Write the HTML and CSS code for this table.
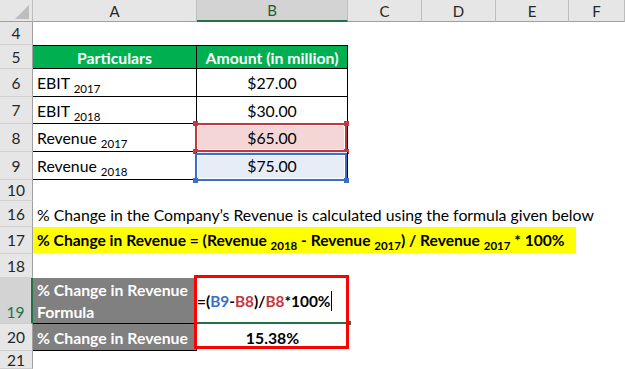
FILE: index.html
```html
<!DOCTYPE html>
<html>
<head>
<meta charset="utf-8">
<link rel="stylesheet" href="styles.css">
</head>
<body>
<div class="sheet">
  <div class="corner"><svg width="33" height="22" viewBox="0 0 33 22"><polygon points="29,5 29,19 15,19" fill="#bdbdbd"/></svg></div>
  <div class="colhdr">A</div>
  <div class="colhdr sel">B</div>
  <div class="colhdr">C</div>
  <div class="colhdr">D</div>
  <div class="colhdr">E</div>
  <div class="colhdr">F</div>

  <div class="rowhdr">4</div><div class="blank span6"></div>

  <div class="rowhdr">5</div>
  <div class="cell th">Particulars</div>
  <div class="cell th">Amount (in million)</div>
  <div class="blank span4"></div>

  <div class="rowhdr">6</div>
  <div class="cell td"><span>EBIT <sub>2017</sub></span></div>
  <div class="cell td num">$27.00</div>
  <div class="blank span4"></div>

  <div class="rowhdr">7</div>
  <div class="cell td"><span>EBIT <sub>2018</sub></span></div>
  <div class="cell td num">$30.00</div>
  <div class="blank span4"></div>

  <div class="rowhdr">8</div>
  <div class="cell td"><span>Revenue <sub>2017</sub></span></div>
  <div class="cell td num ref-red">$65.00<span class="selbox red"><i class="h tl"></i><i class="h tr"></i><i class="h bl"></i><i class="h br"></i></span></div>
  <div class="blank span4"></div>

  <div class="rowhdr">9</div>
  <div class="cell td"><span>Revenue <sub>2018</sub></span></div>
  <div class="cell td num ref-blue">$75.00<span class="selbox blue"><i class="h bl"></i><i class="h br"></i></span></div>
  <div class="blank span4"></div>

  <div class="rowhdr">10</div><div class="blank span6"></div>

  <div class="rowhdr">16</div>
  <div class="text span6">% Change in the Company’s Revenue is calculated using the formula given below</div>

  <div class="rowhdr">17</div>
  <div class="span6"><div class="highlight"><span>% Change in Revenue = (Revenue <sub>2018</sub> - Revenue <sub>2017</sub>) / Revenue <sub>2017</sub> * 100%</span></div></div>

  <div class="rowhdr">18</div><div class="blank span6"></div>

  <div class="rowhdr active">19</div>
  <div class="label tall">% Change in Revenue<br>Formula</div>
  <div class="result">
    <div class="formula"><span>=(<span class="b">B9</span>-<span class="r">B8</span>)/<span class="r">B8</span>*100%</span><span class="caret"></span><i class="edit-handle"></i></div>
    <div class="value">15.38%</div>
  </div>
  <div class="blank span4"></div>

  <div class="rowhdr">20</div>
  <div class="label">% Change in Revenue</div>
  <div class="blank span4"></div>

  <div class="rowhdr">21</div><div class="blank span6"></div>
</div>
</body>
</html>
```
FILE: styles.css
```css
html, body {
  margin: 0;
  padding: 0;
  background: #fff;
  overflow: hidden;
}
.sheet {
  width: 625px;
  height: 369px;
  display: grid;
  grid-template-columns: 33px 164px 151px 74px 74px 73px 56px;
  grid-template-rows: 22px 23px 24px 28px 27px 28px 28px 21px 26px 27px 24px 46px 27px 18px;
  font-family: Lato, "Open Sans", sans-serif;
  font-size: 15.8px;
  color: #000;
  overflow: hidden;
}
.corner {
  background: #e6e6e6;
  border-right: 1px solid #bdbdbd;
  border-bottom: 1px solid #a0a0a0;
  box-sizing: border-box;
}
.corner svg { display: block; }
.colhdr {
  background: #e6e6e6;
  border-right: 1px solid #bdbdbd;
  border-bottom: 1px solid #a0a0a0;
  box-sizing: border-box;
  display: flex;
  align-items: center;
  justify-content: center;
  color: #262626;
  font-size: 15px;
}
.colhdr.sel {
  background: #d3d3d3;
  border-bottom: 2px solid #217346;
  color: #1d5e36;
}
.rowhdr {
  background: #e6e6e6;
  border-right: 1px solid #a0a0a0;
  border-bottom: 1px solid #cfcfcf;
  box-sizing: border-box;
  display: flex;
  align-items: center;
  justify-content: center;
  color: #262626;
  font-size: 15.5px;
}
.rowhdr.active {
  background: #d3d3d3;
  color: #217346;
  border-right: 2px solid #217346;
  align-items: flex-end;
  padding-bottom: 2px;
}
.span6 { grid-column: span 6; }
.span4 { grid-column: span 4; }
.cell {
  box-sizing: border-box;
  border-right: 1px solid #000;
  border-bottom: 1px solid #000;
  display: flex;
  align-items: center;
  white-space: nowrap;
  position: relative;
}
.th {
  background: #00b050;
  color: #fff;
  font-weight: bold;
  justify-content: center;
  border-top: 1px solid #000;
}
.td { padding-left: 4px; }
.num { justify-content: center; padding-left: 0; }
sub {
  font-size: 11.5px;
  vertical-align: -4px;
  line-height: 0;
}
.ref-red { background: #f4d6d6; }
.ref-blue { background: #e7edf7; }
.selbox {
  position: absolute;
  left: -2px;
  right: 0;
  top: -1px;
  bottom: -1px;
  border: 2px solid;
  box-shadow: inset 0 0 0 1px #fff;
}
.selbox.red { border-color: #c3373e; }
.selbox.blue { border-color: #3b6fc6; top: 1px; bottom: -2px; }
.h {
  position: absolute;
  width: 5px;
  height: 5px;
}
.red .h { background: #c3373e; }
.blue .h { background: #3b6fc6; }
.h.tl { left: -4px; top: -4px; }
.h.tr { right: -4px; top: -4px; }
.h.bl { left: -4px; bottom: -4px; }
.h.br { right: -4px; bottom: -4px; }
.text {
  display: flex;
  align-items: center;
  padding-left: 4px;
  white-space: nowrap;
}
.highlight {
  width: 543px;
  height: 26px;
  box-sizing: border-box;
  background: #ffff00;
  font-weight: bold;
  font-size: 15.6px;
  display: flex;
  align-items: center;
  padding-left: 4px;
  white-space: nowrap;
}
.highlight sub { font-weight: bold; }
.label {
  background: #808080;
  color: #fff;
  font-weight: bold;
  display: flex;
  align-items: center;
  padding-left: 4px;
  border-bottom: 1px solid #000;
  border-right: 1px solid #000;
  box-sizing: border-box;
  white-space: nowrap;
}
.label.tall {
  line-height: 22px;
  align-items: flex-end;
}
.result {
  grid-row: span 2;
  display: flex;
  flex-direction: column;
  position: relative;
}
.result::after {
  content: "";
  position: absolute;
  left: -3px;
  top: -3px;
  right: -1px;
  bottom: 2px;
  border: 3px solid #ff0000;
}
.formula {
  height: 46px;
  box-sizing: border-box;
  border-bottom: 2px solid #217346;
  display: flex;
  align-items: center;
  font-weight: bold;
  font-size: 15.4px;
  white-space: nowrap;
  position: relative;
  padding-top: 2px;
}
.formula .b { color: #3b6fc6; }
.formula .r { color: #c3373e; }
.caret {
  display: inline-block;
  width: 1px;
  height: 20px;
  background: #000;
  margin-left: 1px;
}
.edit-handle {
  position: absolute;
  right: -3px;
  bottom: -3px;
  width: 4px;
  height: 4px;
  background: #217346;
}
.value {
  height: 27px;
  display: flex;
  align-items: center;
  justify-content: center;
  font-weight: bold;
}
```
